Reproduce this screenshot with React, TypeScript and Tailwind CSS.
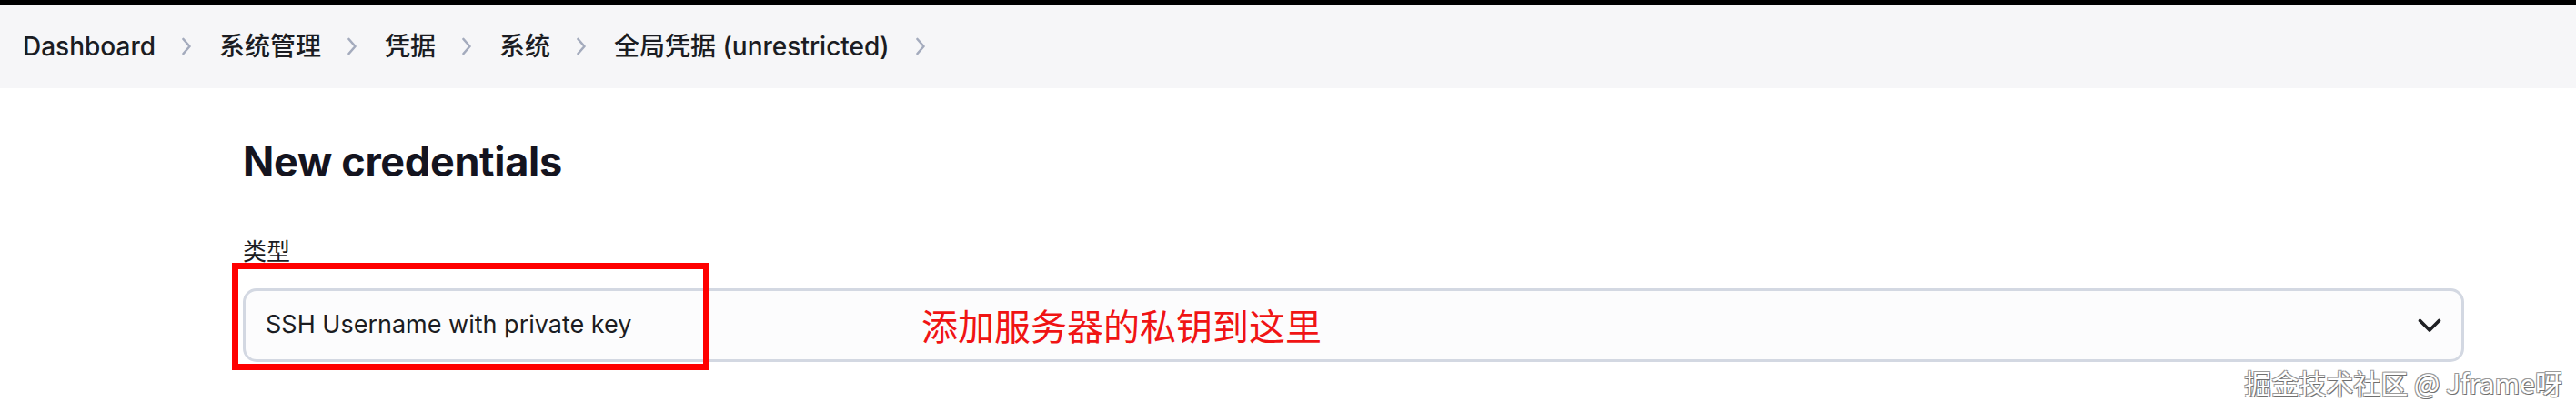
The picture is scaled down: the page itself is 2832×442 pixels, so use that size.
import { Fragment } from 'react';

const crumbs = ['Dashboard', '系统管理', '凭据', '系统', '全局凭据 (unrestricted)'];

function Chevron() {
  return (
    <svg width="10" height="20" viewBox="0 0 10 20" fill="none" className="shrink-0">
      <path d="M1.5 2l7 8-7 8" stroke="#a4abbd" strokeWidth="2.6" strokeLinecap="round" strokeLinejoin="round" />
    </svg>
  );
}

export default function App() {
  const font = "font-['Inter','Noto_Sans_CJK_SC',sans-serif]";

  return (
    <div className={`relative w-[2832px] h-[442px] bg-white overflow-hidden ${font}`}>
      {/* top strip */}
      <div className="h-[5px] bg-black" />

      {/* Breadcrumbs */}
      <div className="h-[92px] bg-[#f6f6f8] flex items-center pl-[25px] text-[28px] font-medium text-[#1b1c22]">
        {crumbs.map((c, i) => (
          <Fragment key={i}>
            <span className="whitespace-nowrap leading-none">{c}</span>
            <span className="pl-[29px] pr-[31px] flex items-center">
              <Chevron />
            </span>
          </Fragment>
        ))}
      </div>

      {/* Main */}
      <div className="pl-[267px] pr-[123px]">
        <h1 className="mt-[53px] text-[45px] leading-[56px] font-bold text-[#14141f] tracking-[-0.3px]">
          New credentials
        </h1>

        <div className="mt-[55px] text-[26px] leading-[32px] text-[#1b1c22]">类型</div>

        <div className="relative mt-[24px]">
          <div className="h-[81px] border-[3px] border-[#d3d8e2] rounded-[15px] bg-[#fcfcfd] flex items-center justify-between pl-[22px] pr-[22px]">
            <span className="text-[27px] text-[#1b1c22]">SSH Username with private key</span>
            <svg width="26" height="16" viewBox="0 0 26 16" fill="none">
              <path d="M2.5 2.5l10.5 10.5L23.5 2.5" stroke="#1f2024" strokeWidth="3.6" strokeLinecap="round" strokeLinejoin="round" />
            </svg>
          </div>

          {/* annotation */}
          <div className="absolute left-[-12px] top-[-28px] w-[525px] h-[118px] border-[7px] border-[#ff0000]" />
          <div className="absolute left-[746px] top-[16px] text-[40px] leading-[48px] text-[#f01414] font-['Noto_Sans_CJK_SC',sans-serif] whitespace-nowrap">
            添加服务器的私钥到这里
          </div>
        </div>
      </div>

      {/* watermark */}
      <div className="absolute right-[15px] bottom-[4px] text-[30px] leading-[36px] text-white font-['Noto_Sans_CJK_SC',sans-serif] whitespace-nowrap [text-shadow:1px_1px_0_#6f6f6f,-1px_-1px_0_#9a9a9a,1px_-1px_0_#9a9a9a,-1px_1px_0_#9a9a9a]">
        掘金技术社区 @ Jframe呀
      </div>
    </div>
  );
}
